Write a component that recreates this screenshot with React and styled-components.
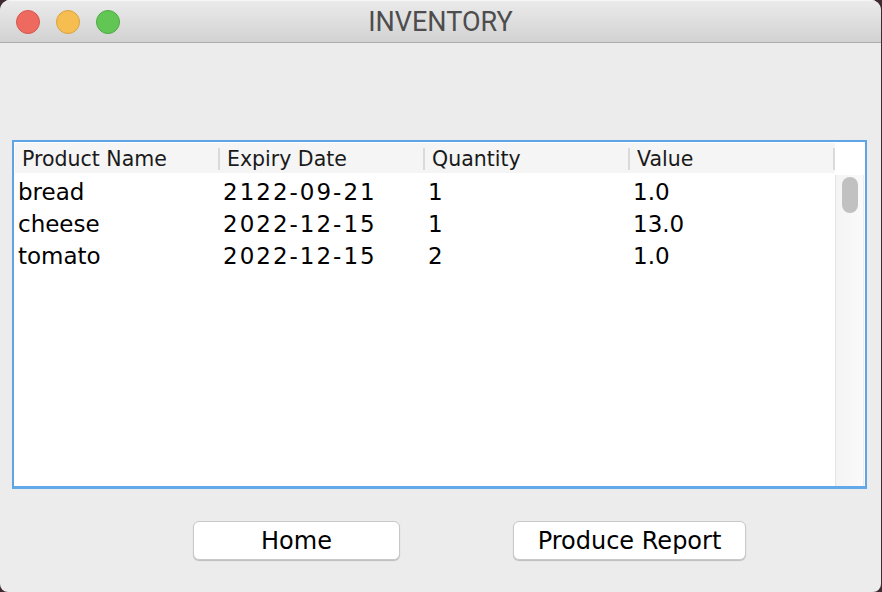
import React from "react";
import styled, { createGlobalStyle } from "styled-components";

const Global = createGlobalStyle`
  html, body { margin: 0; padding: 0; background: #3f2b2f; }
  body { width: 882px; height: 592px; overflow: hidden; }
`;

const Window = styled.div`
  width: 881px;
  height: 592px;
  background: #ececec;
  border-radius: 10px 10px 8px 8px;
  overflow: hidden;
  display: flex;
  flex-direction: column;
`;

const TitleBar = styled.div`
  height: 42px;
  flex: none;
  display: grid;
  grid-template-columns: 1fr auto 1fr;
  align-items: center;
  padding: 0 16px;
  background: linear-gradient(#ebebeb, #d2d2d2);
  border-bottom: 1px solid #aeaeae;
  box-shadow: inset 0 1px 0 #f6f6f6;
`;

const Lights = styled.div`
  display: flex;
  gap: 16px;
  padding-top: 2px;
`;

const Light = styled.span`
  width: 22px;
  height: 22px;
  border-radius: 50%;
  background: ${(p) => p.$fill};
  border: 1px solid ${(p) => p.$edge};
`;

const Title = styled.div`
  font-family: Roboto, "Liberation Sans", sans-serif;
  font-size: 27px;
  color: #4d4d4d;
  padding-top: 2px;
`;

const Content = styled.div`
  flex: 1;
  display: flex;
  flex-direction: column;
  padding: 97px 14px 0 12px;
`;

const Frame = styled.div`
  height: 349px;
  box-sizing: border-box;
  border: 2px solid #5fa5e6;
  border-bottom: 3px solid #62a9ea;
  background: #fff;
  padding: 1px 1px 0 1px;
  display: grid;
  grid-template-columns: 820px 1fr;
  grid-template-rows: 30px 1fr;
`;

const HeaderRow = styled.div`
  display: grid;
  grid-template-columns: repeat(4, 205px);
  background: #f5f5f5;
`;

const HeaderCell = styled.div`
  margin: 5px 0 3px;
  padding-left: 7px;
  line-height: 22px;
  font-family: "DejaVu Sans", Verdana, sans-serif;
  font-size: 20.5px;
  color: #1a1a1a;
  border-right: 2px solid #dadada;
  white-space: nowrap;
`;

const Corner = styled.div`
  background: #fff;
`;

const Rows = styled.div`
  padding-top: 3px;
`;

const Row = styled.div`
  display: grid;
  grid-template-columns: repeat(4, 205px);
  height: 32px;
`;

const Cell = styled.div`
  padding-left: 3px;
  line-height: 32px;
  font-family: "DejaVu Sans", Verdana, sans-serif;
  font-size: 23px;
  color: #000;
  letter-spacing: ${(p) => (p.$spaced ? "2px" : "0")};
  white-space: nowrap;
`;

const Track = styled.div`
  margin-top: 2px;
  background: linear-gradient(90deg, #f4f4f4, #fafafa);
  border-left: 1px solid #e4e4e4;
  border-right: 1px solid #ececec;
  display: flex;
  justify-content: center;
  padding-top: 2px;
`;

const Thumb = styled.div`
  width: 16px;
  height: 36px;
  border-radius: 8px;
  background: #c1c1c1;
`;

const ButtonBar = styled.div`
  display: flex;
  gap: 113px;
  padding-left: 181px;
  margin-top: 32px;
`;

const Button = styled.button`
  width: ${(p) => p.$w}px;
  height: 39px;
  box-sizing: border-box;
  background: #fff;
  border: 1px solid #c9c9c9;
  border-radius: 6px;
  box-shadow: 0 1px 1px rgba(0, 0, 0, 0.2);
  font-family: "DejaVu Sans", Verdana, sans-serif;
  font-size: 24px;
  color: #000;
  padding: 0;
`;

const columns = ["Product Name", "Expiry Date", "Quantity", "Value"];
const data = [
  ["bread", "2122-09-21", "1", "1.0"],
  ["cheese", "2022-12-15", "1", "13.0"],
  ["tomato", "2022-12-15", "2", "1.0"],
];

export default function App() {
  return (
    <>
      <Global />
      <Window>
        <TitleBar>
          <Lights>
            <Light $fill="#ee6a5f" $edge="#d5574d" />
            <Light $fill="#f6be50" $edge="#d9a23f" />
            <Light $fill="#62c655" $edge="#4fa843" />
          </Lights>
          <Title>INVENTORY</Title>
          <div />
        </TitleBar>
        <Content>
          <Frame>
            <HeaderRow>
              {columns.map((c) => (
                <HeaderCell key={c}>{c}</HeaderCell>
              ))}
            </HeaderRow>
            <Corner />
            <Rows>
              {data.map((r) => (
                <Row key={r[0]}>
                  {r.map((v, i) => (
                    <Cell key={i} $spaced={i === 1}>
                      {v}
                    </Cell>
                  ))}
                </Row>
              ))}
            </Rows>
            <Track>
              <Thumb />
            </Track>
          </Frame>
          <ButtonBar>
            <Button $w={207}>Home</Button>
            <Button $w={233}>Produce Report</Button>
          </ButtonBar>
        </Content>
      </Window>
    </>
  );
}
